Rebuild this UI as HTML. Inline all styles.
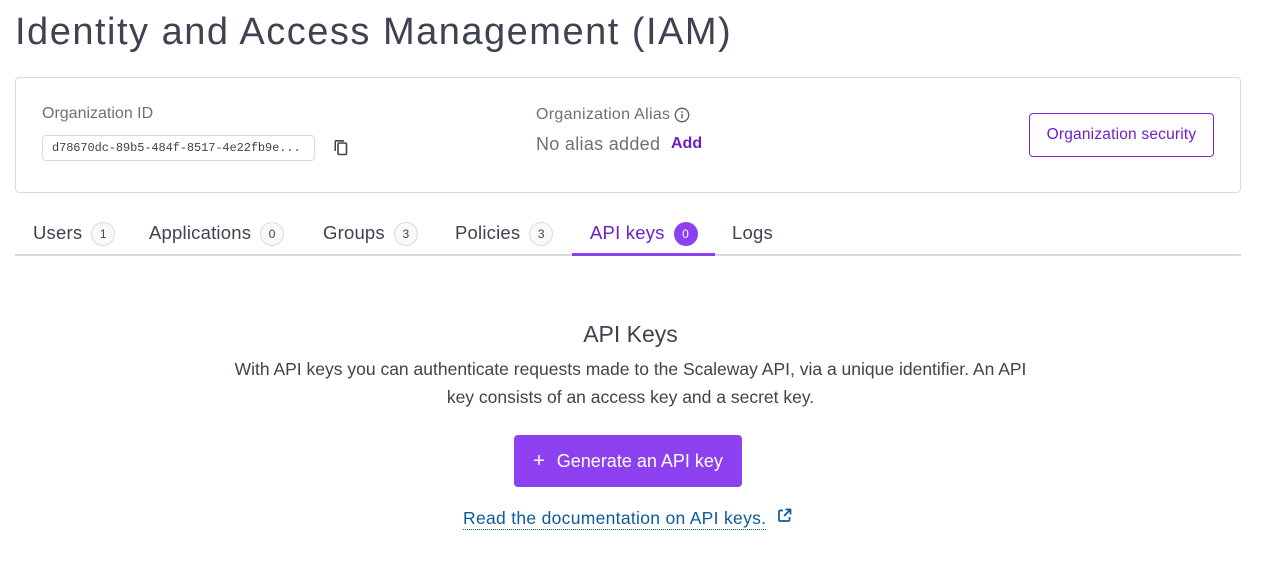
<!DOCTYPE html>
<html><head><meta charset="utf-8"><style>
*{margin:0;padding:0;box-sizing:border-box}
body{width:1261px;height:561px;background:#fff;font-family:"Liberation Sans",sans-serif;color:#3f4250;position:relative;overflow:hidden}
.a{position:absolute;white-space:nowrap}
.badge{display:inline-block;width:24px;height:24px;border:1px solid #d9dadd;border-radius:12px;font-size:12px;text-align:center;line-height:22px;color:#3f4250;background:#f9f9fa;vertical-align:middle;margin-left:9px}
.tab{font-size:18.5px;line-height:24px;letter-spacing:0.2px}
</style></head><body>
<div class="a" style="left:15px;top:11px;font-size:38px;color:#3f4250;letter-spacing:1.5px">Identity and Access Management (IAM)</div>
<div class="a" style="left:15px;top:77px;width:1226px;height:116px;border:1px solid #d9dadd;border-radius:4px"></div>
<div class="a" style="left:42px;top:105px;font-size:16px;color:#6d6f7e">Organization ID</div>
<div class="a" style="left:42px;top:135px;width:273px;height:26px;border:1px solid #d9dadd;border-radius:4px;font-family:'Liberation Mono',monospace;font-size:12px;letter-spacing:-0.1px;line-height:24px;padding-left:9px;color:#3f4250;overflow:hidden">d78670dc-89b5-484f-8517-4e22fb9e...</div>
<svg class="a" style="left:333px;top:139px" width="16" height="17" viewBox="0 0 16 17"><path d="M3 1h8v1.6H3v9.4H1.5V2.5A1.5 1.5 0 0 1 3 1z" fill="#3f4250"/><rect x="5" y="4" width="8.5" height="11.5" rx="1.2" fill="none" stroke="#3f4250" stroke-width="1.6"/></svg>
<div class="a" style="left:536px;top:106px;font-size:16px;color:#6d6f7e;letter-spacing:0.3px">Organization Alias</div>
<svg class="a" style="left:674px;top:107px" width="16" height="16" viewBox="0 0 16 16"><circle cx="8" cy="8" r="6.7" fill="none" stroke="#5a5c6b" stroke-width="1.3"/><rect x="7.3" y="7" width="1.4" height="4.5" fill="#5a5c6b"/><circle cx="8" cy="5" r="0.9" fill="#5a5c6b"/></svg>
<div class="a" style="left:536px;top:134px;font-size:18px;color:#6d6f7e;letter-spacing:0.3px">No alias added</div>
<div class="a" style="left:671px;top:135px;font-size:16px;color:#6d1fc7;font-weight:bold">Add</div>
<div class="a" style="left:1029px;top:113px;width:185px;height:44px;border:1px solid #7d28d6;border-radius:4px;font-size:15.5px;color:#6d1fc7;text-align:center;line-height:42px;letter-spacing:0.2px">Organization security</div>
<div class="a" style="left:15px;top:254px;width:1226px;height:2px;background:#d9dadd"></div>
<div class="a" style="left:572px;top:253px;width:143px;height:3px;background:#8c40ef"></div>
<div class="a tab" style="left:33px;top:221px">Users<span class="badge">1</span></div>
<div class="a tab" style="left:149px;top:221px">Applications<span class="badge">0</span></div>
<div class="a tab" style="left:323px;top:221px">Groups<span class="badge">3</span></div>
<div class="a tab" style="left:455px;top:221px">Policies<span class="badge">3</span></div>
<div class="a tab" style="left:590px;top:221px;color:#6d1fc7">API keys<span class="badge" style="background:#8c40ef;border-color:#8c40ef;color:#fff">0</span></div>
<div class="a tab" style="left:732px;top:221px">Logs</div>
<div class="a" style="left:0;width:1261px;top:321px;text-align:center;font-size:23px;color:#3f4250">API Keys</div>
<div class="a" style="left:0;width:1261px;top:355px;text-align:center;font-size:17.5px;line-height:28px;color:#3f4250;white-space:normal"><div style="width:815px;margin:0 auto">With API keys you can authenticate requests made to the Scaleway API, via a unique identifier. An API key consists of an access key and a secret key.</div></div>
<div class="a" style="left:514px;top:435px;width:228px;height:52px;background:#8c40ef;border-radius:4px;color:#fff;font-size:18px;line-height:52px;text-align:center"><span style="font-size:20px;margin-right:12px">+</span>Generate an API key</div>
<div class="a" style="left:463px;top:507px;font-size:17.5px;letter-spacing:0.3px;color:#0a5a9c;border-bottom:1.5px dotted #0a5a9c;line-height:22px">Read the documentation on API keys.</div>
<svg class="a" style="left:777px;top:508px" width="15" height="15" viewBox="0 0 15 15"><path d="M6 2.5H3a1 1 0 0 0-1 1V12a1 1 0 0 0 1 1h8.5a1 1 0 0 0 1-1V9M8.5 1.5h5v5M13.5 1.5L7 8" fill="none" stroke="#0a5a9c" stroke-width="1.7"/></svg>
</body></html>
